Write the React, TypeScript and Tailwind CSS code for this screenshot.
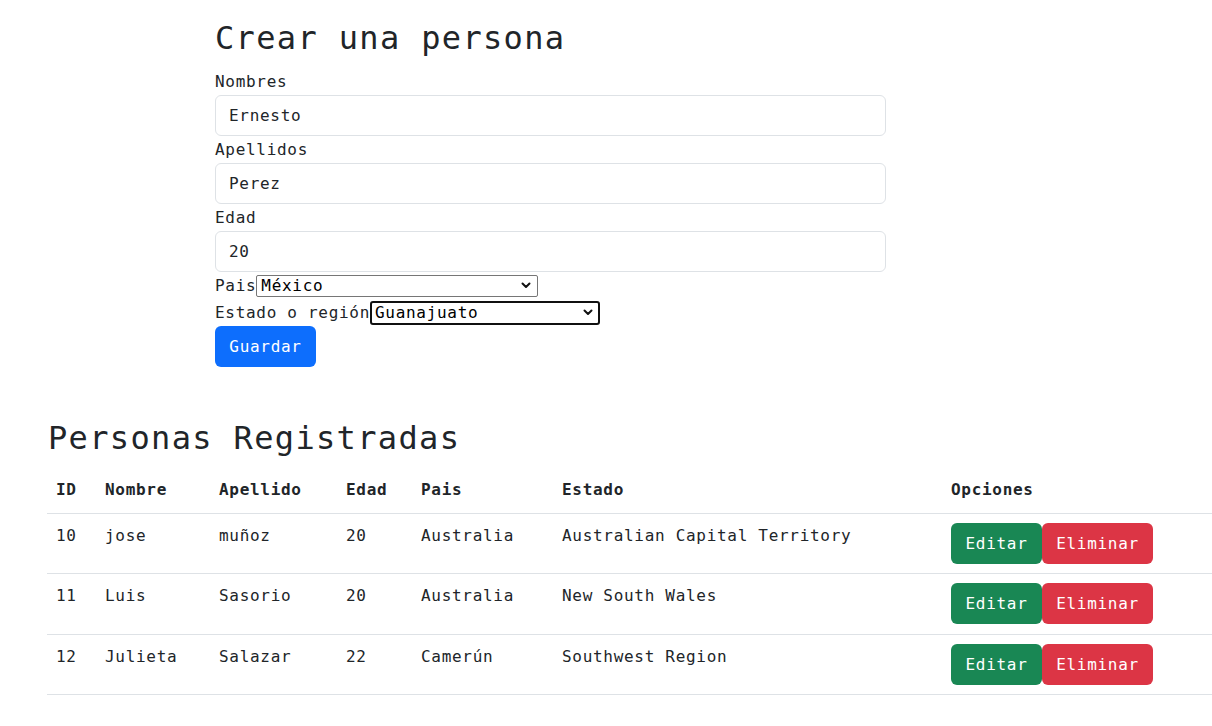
import React from "react";

function Chevron() {
  return (
    <svg width="10" height="7" viewBox="0 0 10 7" className="shrink-0">
      <path d="M1.5 1.5 L5 5 L8.5 1.5" fill="none" stroke="#111" strokeWidth="2" strokeLinecap="round" strokeLinejoin="round" />
    </svg>
  );
}

const rows = [
  { id: "10", nombre: "jose", apellido: "muñoz", edad: "20", pais: "Australia", estado: "Australian Capital Territory", h: "h-[60px]" },
  { id: "11", nombre: "Luis", apellido: "Sasorio", edad: "20", pais: "Australia", estado: "New South Wales", h: "h-[61px]" },
  { id: "12", nombre: "Julieta", apellido: "Salazar", edad: "22", pais: "Camerún", estado: "Southwest Region", h: "h-[60px]" },
];

const grid = "grid grid-cols-[49px_114px_127px_75px_141px_389px_1fr]";

export default function App() {
  return (
    <div className="min-h-[726px] bg-white font-['DejaVu_Sans_Mono',monospace] text-[16px] leading-[27px] tracking-[0.7px] text-[#212529]">
      <div className="ml-[215px] w-[671px] pt-[18px] flex flex-col">
        <h1 className="h-[40px] mb-[10px] text-[32px] leading-[40px] tracking-[1.35px] font-normal">Crear una persona</h1>
        <label className="h-[27px]">Nombres</label>
        <div className="h-[41px] border border-[#dee2e6] rounded-[6px] px-[13px] flex items-center">Ernesto</div>
        <label className="h-[27px]">Apellidos</label>
        <div className="h-[41px] border border-[#dee2e6] rounded-[6px] px-[13px] flex items-center">Perez</div>
        <label className="h-[27px]">Edad</label>
        <div className="h-[41px] border border-[#dee2e6] rounded-[6px] px-[13px] flex items-center">20</div>
        <div className="h-[27px] flex items-center">
          <span>Pais</span>
          <div className="h-[22px] w-[282px] border border-[#767676] rounded-[2px] bg-white pl-[4px] pr-[6px] flex items-center justify-between text-black">
            <span>México</span>
            <Chevron />
          </div>
        </div>
        <div className="h-[27px] flex items-center">
          <span>Estado o región</span>
          <div className="h-[24px] w-[230px] border-2 border-[#101010] rounded-[3px] bg-white pl-[3px] pr-[5px] flex items-center justify-between text-black">
            <span>Guanajuato</span>
            <Chevron />
          </div>
        </div>
        <div>
          <button className="h-[41px] w-[101px] rounded-[6px] bg-[#0d6efd] text-white">Guardar</button>
        </div>
      </div>

      <div className="ml-[47px] mt-[51px]">
        <h2 className="h-[40px] mb-[10px] ml-[1px] text-[32px] leading-[40px] tracking-[1.35px] font-normal">Personas Registradas</h2>
        <div className={`${grid} h-[46px] border-b border-[#dee2e6] font-bold`}>
          {["ID", "Nombre", "Apellido", "Edad", "Pais", "Estado", "Opciones"].map((h) => (
            <div key={h} className="pl-[9px] pt-[8px]">{h}</div>
          ))}
        </div>
        {rows.map((r) => (
          <div key={r.id} className={`${grid} ${r.h} border-b border-[#dee2e6]`}>
            <div className="pl-[9px] pt-[8px]">{r.id}</div>
            <div className="pl-[9px] pt-[8px]">{r.nombre}</div>
            <div className="pl-[9px] pt-[8px]">{r.apellido}</div>
            <div className="pl-[9px] pt-[8px]">{r.edad}</div>
            <div className="pl-[9px] pt-[8px]">{r.pais}</div>
            <div className="pl-[9px] pt-[8px]">{r.estado}</div>
            <div className="pl-[9px] pt-[9px] flex items-start">
              <button className="h-[41px] w-[91px] rounded-[6px] bg-[#198754] text-white">Editar</button>
              <button className="h-[41px] w-[111px] rounded-[6px] bg-[#dc3545] text-white">Eliminar</button>
            </div>
          </div>
        ))}
      </div>
    </div>
  );
}
